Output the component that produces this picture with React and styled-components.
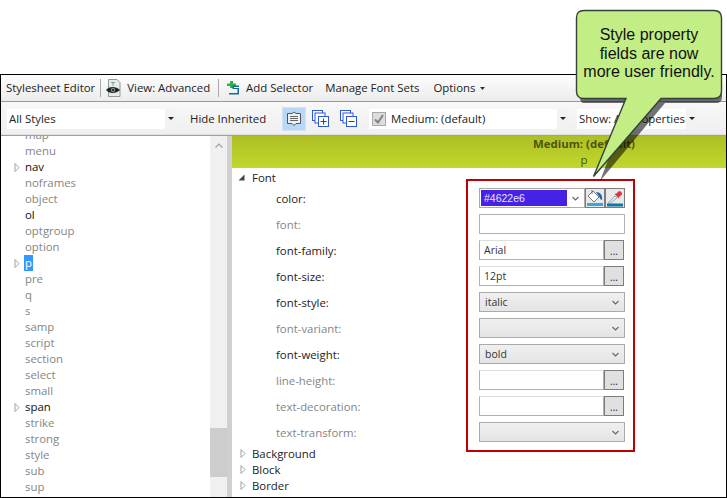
import React from "react";
import styled, { createGlobalStyle } from "styled-components";

const GlobalStyle = createGlobalStyle`
  html, body {
    margin: 0;
    padding: 0;
    background: #fff;
  }
  body {
    font-family: "Open Sans", "Noto Sans", sans-serif;
    font-size: 11.4px;
    color: #222;
  }
`;

const Page = styled.div`
  position: relative;
  width: 727px;
  height: 498px;
  padding-top: 74px;
  box-sizing: border-box;
  overflow: hidden;
`;

const Win = styled.div`
  width: 727px;
  height: 424px;
  box-sizing: border-box;
  border: 1px solid #000;
  display: flex;
  flex-direction: column;
  background: #fff;
`;

const MenuBar = styled.div`
  height: 26px;
  flex: none;
  display: flex;
  align-items: center;
  padding-left: 5px;
  background: linear-gradient(#fdfdfd, #ececec);
  border-bottom: 1px solid #9a9a9a;
`;

const MenuText = styled.span`
  margin-left: ${(props) => props.$left || 0}px;
  margin-top: ${(props) => (props.$raise ? -2 : 0)}px;
  white-space: nowrap;
  color: #222;
`;

const Sep = styled.span`
  width: 1px;
  height: 18px;
  margin-left: ${(props) => props.$left}px;
  background: #a8a8a8;
`;

const IconSlot = styled.span`
  display: flex;
  margin-left: ${(props) => props.$left}px;
`;

const FilterBar = styled.div`
  height: 33px;
  flex: none;
  display: flex;
  align-items: center;
  background: linear-gradient(#f8f8f8, #efefef);
  border-bottom: 1px solid #a0a0a0;
  box-shadow: inset 0 -1px 0 #e0e0e0;
`;

const Combo = styled.div`
  width: ${(props) => props.$width}px;
  height: 20px;
  margin-left: ${(props) => props.$left}px;
  display: flex;
  align-items: center;
  background: #fff;
  padding-left: 2px;
  box-sizing: border-box;
  white-space: nowrap;
  overflow: hidden;
`;

const ComboLabel = styled.span`
  flex: 1;
  display: flex;
  align-items: center;
  overflow: hidden;
`;

const ComboArrow = styled.span`
  flex: none;
  width: 11px;
  height: 20px;
  background: #f2f2f2;
  display: flex;
  align-items: center;
  justify-content: center;
  &::after {
    content: "";
    border-left: 3px solid transparent;
    border-right: 3px solid transparent;
    border-top: 3px solid #222;
  }
`;

const Toggle = styled.span`
  width: 24px;
  height: 24px;
  display: flex;
  align-items: center;
  justify-content: center;
  margin-left: ${(props) => props.$left}px;
  background: ${(props) => (props.$on ? "#b7d8f6" : "transparent")};
  border: 1px solid ${(props) => (props.$on ? "#d2e4f4" : "transparent")};
  box-sizing: border-box;
`;

const Body = styled.div`
  flex: 1;
  min-height: 0;
  display: flex;
`;

const TreePane = styled.div`
  width: 206px;
  margin-left: 3px;
  flex: none;
  overflow: hidden;
`;

const TreeList = styled.div`
  margin-top: -9px;
`;

const TreeRow = styled.div`
  height: 16px;
  display: flex;
  align-items: center;
  position: relative;
  padding-left: 20px;
  color: ${(props) => (props.$dark ? "#111" : "#858585")};
`;

const TreeName = styled.span`
  padding: 0 1px;
  line-height: 16px;
  background: ${(props) => (props.$selected ? "#3399ff" : "transparent")};
  color: ${(props) => (props.$selected ? "#fff" : "inherit")};
`;

const ScrollBar = styled.div`
  width: 17px;
  flex: none;
  background: #f0f0f0;
  display: flex;
  flex-direction: column;
  align-items: center;
`;

const ScrollUp = styled.span`
  display: flex;
  margin-top: 7px;
`;

const ScrollThumb = styled.div`
  width: 17px;
  height: 49px;
  margin-top: 280px;
  background: #cdcdcd;
`;

const Splitter = styled.div`
  width: 5px;
  flex: none;
  background: #d0d0d0;
`;

const PropPane = styled.div`
  flex: 1;
  min-width: 0;
  overflow: hidden;
  display: flex;
  flex-direction: column;
`;

const PropHead = styled.div`
  height: 32px;
  flex: none;
  padding-left: 234px;
  background: linear-gradient(#aebf24, #c1d82d);
  color: #4d5510;
  line-height: 16px;
`;

const HeadTitle = styled.div`
  font-weight: 700;
  width: 236px;
  text-align: center;
`;

const HeadSub = styled.div`
  width: 236px;
  text-align: center;
`;

const Group = styled.div`
  height: ${(props) => props.$height || 16}px;
  display: flex;
  align-items: center;
  position: relative;
  padding-left: 20px;
  color: #222;
  flex: none;
`;

const PropRows = styled.div`
  display: flex;
  flex-direction: column;
  gap: 6px;
  margin-top: 2px;
  margin-bottom: 3px;
`;

const PropRow = styled.div`
  height: 20px;
  display: flex;
  align-items: center;
`;

const PropLabel = styled.span`
  width: 247px;
  padding-left: 44px;
  box-sizing: border-box;
  flex: none;
  color: ${(props) => (props.$dark ? "#222" : "#858585")};
`;

const TextField = styled.div`
  width: ${(props) => props.$width}px;
  height: 20px;
  box-sizing: border-box;
  border: 1px solid #b0b0b0;
  border-top-color: ${(props) => (props.$soft ? "#dedede" : "#b0b0b0")};
  background: #fff;
  font-size: 10.5px;
  line-height: 18px;
  padding-left: 4px;
  color: #333;
`;

const DotsButton = styled.div`
  width: 20px;
  height: 20px;
  box-sizing: border-box;
  border: 1px solid #7c7c7c;
  background: #e0e0e0;
  text-align: center;
  line-height: 20px;
  font-size: 10px;
  color: #222;
`;

const SelectBox = styled.div`
  width: 146px;
  height: 20px;
  box-sizing: border-box;
  border: 1px solid #ababab;
  background: linear-gradient(#f0f0f0, #e4e4e4);
  display: flex;
  align-items: center;
  justify-content: space-between;
  padding: 0 5px;
  font-size: 10.5px;
  color: #333;
`;

const ColorCombo = styled.div`
  width: 106px;
  height: 20px;
  box-sizing: border-box;
  border: 1px solid #ababab;
  background: #fff;
  display: flex;
  align-items: center;
  justify-content: space-between;
  padding: 1px 5px 1px 1px;
`;

const ColorValue = styled.div`
  width: 86px;
  height: 16px;
  background: #4622e6;
  color: #e8e4ff;
  font-family: "Liberation Sans", sans-serif;
  font-size: 10.5px;
  line-height: 16px;
  padding-left: 3px;
  box-sizing: border-box;
`;

const ColorButton = styled.div`
  width: 20px;
  height: 20px;
  box-sizing: border-box;
  border: 1px solid #7c7c7c;
  background: #ddd;
  display: flex;
`;

const RedFrame = styled.div`
  position: absolute;
  left: 466px;
  top: 179px;
  width: 169px;
  height: 273px;
  box-sizing: border-box;
  border: 2.5px solid #c00000;
  pointer-events: none;
`;

const CalloutArt = styled.svg`
  position: absolute;
  left: 570px;
  top: 4px;
`;

const CalloutText = styled.div`
  position: absolute;
  left: 576px;
  top: 26px;
  width: 146px;
  text-align: center;
  font-family: "Liberation Sans", sans-serif;
  font-size: 16px;
  line-height: 18.5px;
  color: #111;
`;

const TreeArrow = ({ left }) => (
  <svg width="6" height="9" viewBox="0 0 6 9" style={{ position: "absolute", left }}>
    <path d="M1 .5 5 4.5 1 8.5Z" fill="#fff" stroke="#a0a0a0" />
  </svg>
);

const OpenArrow = () => (
  <svg width="7" height="7" viewBox="0 0 7 7" style={{ position: "absolute", left: 6 }}>
    <path d="M6.5 .5V6.5H.5Z" fill="#444" />
  </svg>
);

const Chevron = () => (
  <svg width="7" height="5" viewBox="0 0 7 5">
    <path d="M.5 1 3.5 4 6.5 1" fill="none" stroke="#666" strokeWidth="1.1" />
  </svg>
);

const ViewIcon = () => (
  <svg width="15" height="18" viewBox="0 0 15 18">
    <path d="M2.5.5H11L14 3.5V17.5H2.5Z" fill="#e6ecec" stroke="#8b9a9a" />
    <path d="M5 3.5H9M7 3.5V7" stroke="#7f9a9a" fill="none" />
    <path d="M0 11C3 7 10 7 14 11 10 15 3 15 0 11Z" fill="#222" />
    <circle cx="7" cy="11" r="2.200" fill="#8a8a8a" />
    <circle cx="7" cy="11" r="1" fill="#111" />
  </svg>
);

const AddIcon = () => (
  <svg width="13" height="14" viewBox="0 0 13 14">
    <path d="M3 0H6V2.500H9V5H6V7H3V5H0V2.500H3Z" fill="#2db34a" />
    <path d="M12 4.500H5.500V8H10.500V12H2V13.500H12V7H7V6H12Z" fill="#0f6f8c" />
  </svg>
);

const NoteIcon = () => (
  <svg width="16" height="16" viewBox="0 0 16 16">
    <path d="M1.500 2.500H6L8 1 10 2.500H14.500V12.500H10L8 14.500 6 12.500H1.500Z" fill="#eef1f4" stroke="#555" />
    <path d="M4 5.500H12M4 7.500H12M4 9.500H12" stroke="#666" />
  </svg>
);

const StackIcon = ({ minus }) => (
  <svg width="17" height="17" viewBox="0 0 17 17">
    <rect x=".5" y=".5" width="10" height="10" fill="#fff" stroke="#2f57d9" />
    <rect x="3" y="3" width="10" height="10" fill="#fff" stroke="#2f57d9" />
    <rect x="6.500" y="6.500" width="10" height="10" fill="#fff" stroke="#2f57d9" />
    <path d="M8.500 11.500H14.500" stroke="#1d3fb5" />
    {!minus && <path d="M11.500 8.500V14.500" stroke="#1d3fb5" />}
  </svg>
);

const CheckIcon = () => (
  <svg width="14" height="14" viewBox="0 0 14 14" style={{ margin: "0 5px 0 1px", flex: "none" }}>
    <rect x=".5" y=".5" width="13" height="13" fill="#dcdcdc" stroke="#a8a8a8" />
    <path d="M3 7.500 6 10.500 11 3" fill="none" stroke="#808080" strokeWidth="2" />
  </svg>
);

const BucketIcon = () => (
  <svg width="18" height="18" viewBox="0 0 18 18">
    <rect width="18" height="18" fill="#e8e8e8" />
    <path d="M2 7 7 2 13 8 8 13Z" fill="#fff" stroke="#777" />
    <path d="M6 1V5" stroke="#777" />
    <path d="M10 3C14 3 17 6 16 11 14 11 14 8 12 6Z" fill="#1f63b5" />
    <rect x="1" y="14" width="16" height="3" fill="#32a9e6" />
  </svg>
);

const DropperIcon = () => (
  <svg width="18" height="18" viewBox="0 0 18 18">
    <rect width="18" height="18" fill="#e8e8e8" />
    <path d="M2.500 13.500 9 7 11 9 4.500 14H2.500Z" fill="#dfeaf2" stroke="#7d9db0" strokeWidth=".8" />
    <path d="M8.500 5 13 9.500 13.500 7.500 16 5.500Q16.500 2.500 13 2L10.500 4.500Z" fill="#e5303f" />
    <rect x="1" y="14.500" width="16" height="3" fill="#13779f" />
  </svg>
);

const treeItems = [
  { name: "map" },
  { name: "menu" },
  { name: "nav", dark: true, arrow: true },
  { name: "noframes" },
  { name: "object" },
  { name: "ol", dark: true },
  { name: "optgroup" },
  { name: "option" },
  { name: "p", dark: true, arrow: true, selected: true },
  { name: "pre" },
  { name: "q" },
  { name: "s" },
  { name: "samp" },
  { name: "script" },
  { name: "section" },
  { name: "select" },
  { name: "small" },
  { name: "span", dark: true, arrow: true },
  { name: "strike" },
  { name: "strong" },
  { name: "style" },
  { name: "sub" },
  { name: "sup" },
];

const fontProps = [
  { name: "color:", dark: true, kind: "color" },
  { name: "font:", kind: "plain" },
  { name: "font-family:", dark: true, kind: "dots", value: "Arial" },
  { name: "font-size:", dark: true, kind: "dots", value: "12pt" },
  { name: "font-style:", dark: true, kind: "select", value: "italic" },
  { name: "font-variant:", kind: "select" },
  { name: "font-weight:", dark: true, kind: "select", value: "bold" },
  { name: "line-height:", kind: "dots" },
  { name: "text-decoration:", kind: "dots" },
  { name: "text-transform:", kind: "select" },
];

function PropField({ prop }) {
  if (prop.kind === "color") {
    return (
      <>
        <ColorCombo>
          <ColorValue>#4622e6</ColorValue>
          <Chevron />
        </ColorCombo>
        <ColorButton><BucketIcon /></ColorButton>
        <ColorButton><DropperIcon /></ColorButton>
      </>
    );
  }
  if (prop.kind === "plain") return <TextField $width={146} />;
  if (prop.kind === "select") {
    return (
      <SelectBox>
        <span>{prop.value}</span>
        <Chevron />
      </SelectBox>
    );
  }
  return (
    <>
      <TextField $width={125} $soft>{prop.value}</TextField>
      <DotsButton>...</DotsButton>
    </>
  );
}

export default function App() {
  return (
    <Page>
      <GlobalStyle />
      <Win>
        <MenuBar>
          <MenuText $raise>Stylesheet Editor</MenuText>
          <Sep $left={5} />
          <IconSlot $left={5}><ViewIcon /></IconSlot>
          <MenuText $left={6} $raise>View: Advanced</MenuText>
          <Sep $left={8} />
          <IconSlot $left={8}><AddIcon /></IconSlot>
          <MenuText $left={6} $raise>Add Selector</MenuText>
          <MenuText $left={12} $raise>Manage Font Sets</MenuText>
          <MenuText $left={14} $raise>Options</MenuText>
          <svg width="5" height="3" viewBox="0 0 5 3" style={{ marginLeft: 5 }}>
            <path d="M0 0H5L2.500 3Z" fill="#333" />
          </svg>
        </MenuBar>
        <FilterBar>
          <Combo $width={169} $left={6}>
            <ComboLabel>All Styles</ComboLabel>
            <ComboArrow />
          </Combo>
          <MenuText $left={14}>Hide Inherited</MenuText>
          <Toggle $left={16} $on><NoteIcon /></Toggle>
          <Toggle $left={2}><StackIcon /></Toggle>
          <Toggle $left={4}><StackIcon minus /></Toggle>
          <Combo $width={199} $left={9}>
            <ComboLabel><CheckIcon />Medium: (default)</ComboLabel>
            <ComboArrow />
          </Combo>
          <Combo $width={120} $left={9}>
            <ComboLabel>Show: All Properties</ComboLabel>
            <ComboArrow />
          </Combo>
        </FilterBar>
        <Body>
          <TreePane>
            <TreeList>
              {treeItems.map((item) => (
                <TreeRow key={item.name} $dark={item.dark}>
                  {item.arrow && <TreeArrow left={10} />}
                  <TreeName $selected={item.selected}>{item.name}</TreeName>
                </TreeRow>
              ))}
            </TreeList>
          </TreePane>
          <ScrollBar>
            <ScrollUp>
              <svg width="8" height="5" viewBox="0 0 8 5">
                <path d="M.5 4.500 4 1 7.500 4.500" fill="none" stroke="#a0a0a0" strokeWidth="1.2" />
              </svg>
            </ScrollUp>
            <ScrollThumb />
          </ScrollBar>
          <Splitter />
          <PropPane>
            <PropHead>
              <HeadTitle>Medium: (default)</HeadTitle>
              <HeadSub>p</HeadSub>
            </PropHead>
            <Group $height={18}>
              <OpenArrow />
              Font
            </Group>
            <PropRows>
              {fontProps.map((prop) => (
                <PropRow key={prop.name}>
                  <PropLabel $dark={prop.dark}>{prop.name}</PropLabel>
                  <PropField prop={prop} />
                </PropRow>
              ))}
            </PropRows>
            {["Background", "Block", "Border"].map((name) => (
              <Group key={name}>
                <TreeArrow left={8} />
                {name}
              </Group>
            ))}
          </PropPane>
        </Body>
      </Win>
      <RedFrame />
      <CalloutArt width="157" height="182" viewBox="0 0 157 182">
        <path
          d="M14 10H148Q152 10 152 14V93Q152 99 146 99H95L30 177 60 99H14Q10 99 10 93V14Q10 10 14 10Z"
          fill="#000"
          opacity=".55"
        />
        <path
          d="M14 6.500H144Q151.500 6.500 151.500 14V87Q151.500 94.500 144 94.500H91L23.500 172.500 56 94.500H14Q6.500 94.500 6.500 87V14Q6.500 6.500 14 6.500Z"
          fill="#c3ee86"
          stroke="#34423a"
          strokeWidth="1.4"
        />
      </CalloutArt>
      <CalloutText>
        Style property
        <br />
        fields are now
        <br />
        more user friendly.
      </CalloutText>
    </Page>
  );
}
